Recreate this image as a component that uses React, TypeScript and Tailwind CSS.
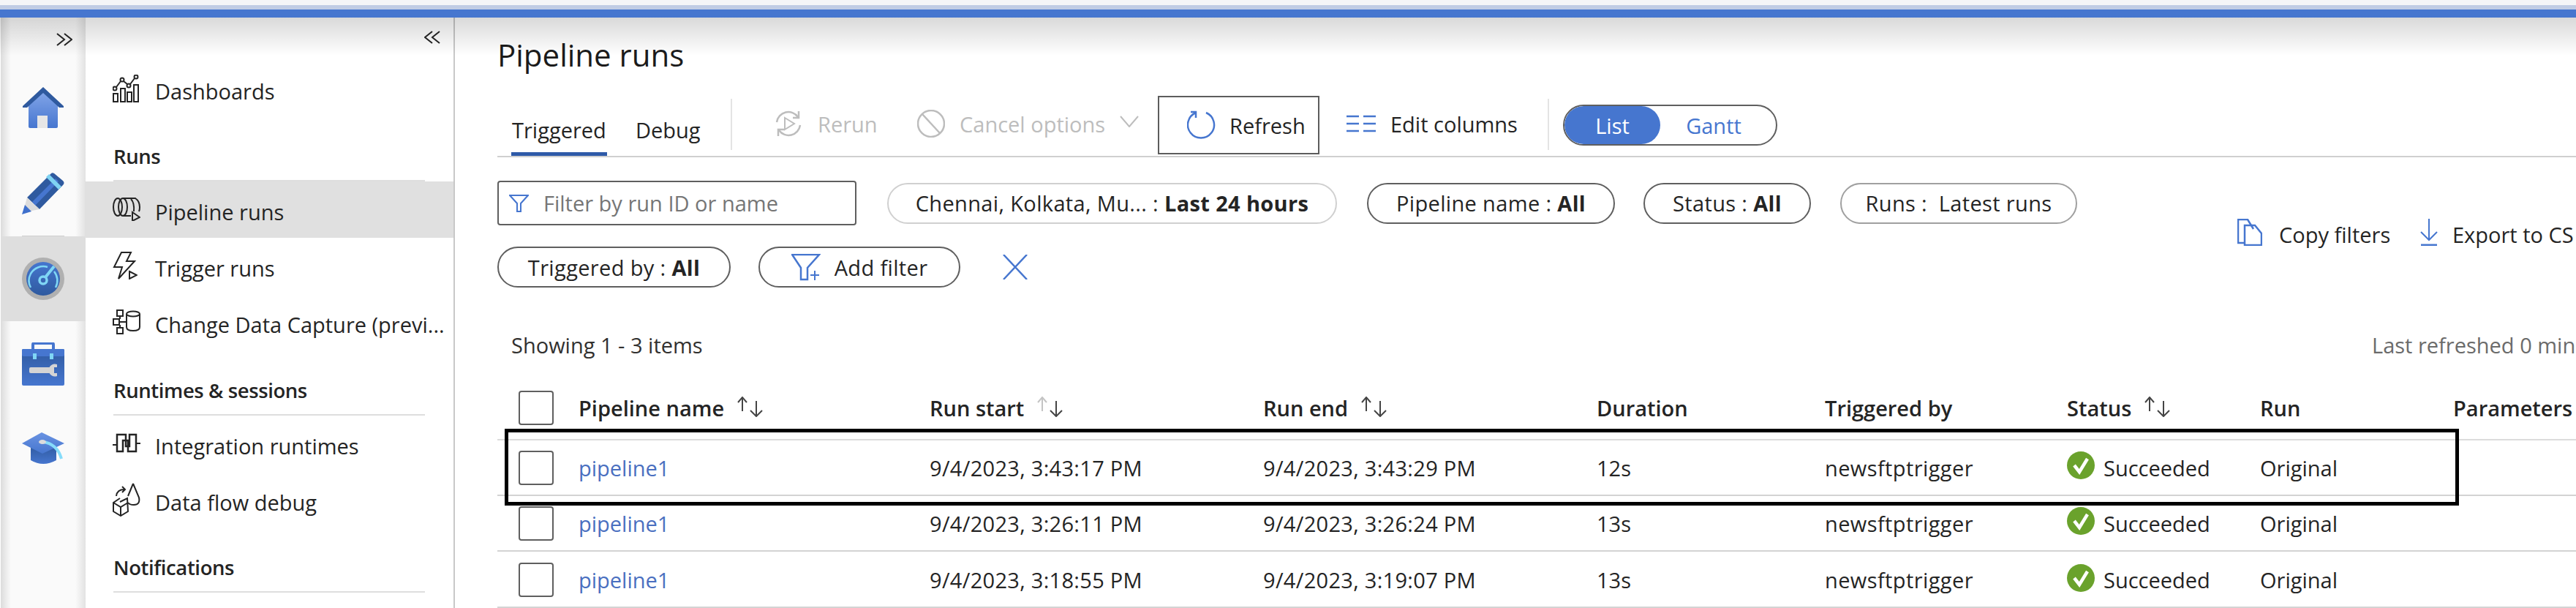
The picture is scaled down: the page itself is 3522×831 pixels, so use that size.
import React from "react";

const S = ({ w, h, children, className = "" }: { w: number; h: number; children: React.ReactNode; className?: string }) => (
  <svg width={w} height={h} viewBox={`0 0 ${w} ${h}`} fill="none" stroke="currentColor" strokeWidth={2} className={`shrink-0 ${className}`}>
    {children}
  </svg>
);

const HomeIcon = () => (
  <svg width="58" height="58" viewBox="0 0 58 58">
    <defs><linearGradient id="hg" x1="0" y1="0" x2="0" y2="1"><stop offset="0" stopColor="#86a8ea" /><stop offset="1" stopColor="#4676cf" /></linearGradient></defs>
    <path d="M29 3 L9 24 V54 a2 2 0 0 0 2 2 H47 a2 2 0 0 0 2-2 V24 Z" fill="url(#hg)" />
    <path d="M1 26 L29 0 L57 26 V28 H51 L29 8 L7 28 H1 Z" fill="#2f5a9f" />
    <rect x="21" y="39" width="14" height="17" fill="#e6e6e6" />
  </svg>
);
const PencilIcon = () => (
  <svg width="59" height="59" viewBox="0 0 59 59">
    <path d="M7 35 L39 3 Q41 0 44 2 L56 12 Q59 15 56 18 L24 51 Z" fill="#2f5a9f" />
    <path d="M14 41 L46 9 L50 13 L18 46 Z" fill="#4676cf" />
    <path d="M33 7 L37 3 L54 20 L50 24 Z" fill="#7fd3f2" />
    <path d="M7 35 L24 51 L9 54 L4 46 Z" fill="#dcdcdc" />
    <path d="M4 45 L13 54 L0 58 Z" fill="#3f70cc" />
  </svg>
);
const GaugeIcon = () => (
  <svg width="58" height="58" viewBox="0 0 58 58">
    <defs><linearGradient id="gg" x1="0" y1="0" x2="0" y2="1"><stop offset="0" stopColor="#4676cf" /><stop offset="1" stopColor="#2f5a9f" /></linearGradient></defs>
    <circle cx="29" cy="29" r="29" fill="#b0b0b0" />
    <circle cx="29" cy="29" r="23" fill="url(#gg)" />
    <g fill="none" stroke="#7fd6f5" strokeWidth="2.5">
      <path d="M12 41 A20 20 0 0 1 12 22 A20 20 0 0 1 35 13" />
      <path d="M44 19 A20 20 0 0 1 46 41" />
      <circle cx="29" cy="31" r="5" strokeWidth="3.5" />
      <path d="M32 27 L44 12" strokeWidth="4" />
    </g>
  </svg>
);
const ToolboxIcon = () => (
  <svg width="58" height="59" viewBox="0 0 58 59">
    <defs><linearGradient id="tg" x1="0" y1="0" x2="0" y2="1"><stop offset="0" stopColor="#2f5a9f" /><stop offset="1" stopColor="#4676cf" /></linearGradient></defs>
    <path d="M15 10 V3 a2 2 0 0 1 2-2 H41 a2 2 0 0 1 2 2 V10" fill="none" stroke="#4676cf" strokeWidth="4" />
    <rect x="0" y="9" width="58" height="50" rx="2" fill="url(#tg)" />
    <rect x="0" y="9" width="58" height="10" rx="2" fill="#4676cf" />
    <rect x="15" y="15" width="5" height="8" fill="#7fd6f5" />
    <rect x="38" y="15" width="5" height="8" fill="#7fd6f5" />
    <rect x="10" y="34" width="33" height="8" rx="2" fill="#d4d4d4" />
    <path d="M48 30 A8.5 8.5 0 1 0 48 46 V42 H44 V34 H48 Z" fill="#d4d4d4" />
  </svg>
);
const HatIcon = () => (
  <svg width="58" height="45" viewBox="0 0 58 45">
    <defs>
      <linearGradient id="ha" x1="0" y1="0" x2="0" y2="1"><stop offset="0" stopColor="#6a93e2" /><stop offset="1" stopColor="#4676cf" /></linearGradient>
      <linearGradient id="hb" x1="0" y1="0" x2="0" y2="1"><stop offset="0" stopColor="#2f5a9f" /><stop offset="1" stopColor="#4676cf" /></linearGradient>
    </defs>
    <path d="M12 18 V38 Q29 48 47 38 V18 Z" fill="url(#hb)" />
    <path d="M0 15 L27 0 L58 15 L28 29 Z" fill="url(#ha)" />
    <path d="M28 13 Q48 15 54 36" fill="none" stroke="#86dcfa" strokeWidth="4" />
    <ellipse cx="28" cy="13" rx="5" ry="3" fill="#dcdcdc" />
  </svg>
);

const Dash = () => (
  <S w={36} h={38}>
    <rect x="1" y="26" width="6" height="11" /><rect x="11" y="19" width="6" height="18" /><rect x="20" y="24" width="6" height="13" /><rect x="29" y="14" width="6" height="23" />
    <circle cx="3" cy="19" r="2.5" /><circle cx="13" cy="7" r="2.5" /><circle cx="22" cy="15" r="2.5" /><circle cx="32" cy="3" r="2.5" />
    <path d="M5 17 L11 9 M15 9 L20 13 M24 13 L30 5" />
  </S>
);
const PipeRuns = () => (
  <S w={38} h={33}>
    <ellipse cx="7" cy="14" rx="6" ry="12" /><ellipse cx="14" cy="14" rx="6" ry="12" />
    <path d="M14 2 H31 Q37 6 37 14 Q37 18 36 20 M14 26 H25 M25 3 Q30 8 29 20" />
    <path d="M27 21 L37 28 L27 33 Z" />
  </S>
);
const TrigRuns = () => (
  <S w={34} h={38}>
    <path d="M12 1 H25 L19 13 H30 L8 37 L13 21 H2 Z" />
    <path d="M23 27 L33 32 L23 37 Z" />
  </S>
);
const Cdc = () => (
  <S w={38} h={34}>
    <rect x="6" y="1" width="8" height="8" /><rect x="1" y="13" width="8" height="8" /><rect x="6" y="25" width="8" height="8" />
    <path d="M10 9 V13 M9 17 H18 M10 21 V25" />
    <ellipse cx="28" cy="6" rx="9" ry="3.5" />
    <path d="M19 6 V24 Q19 29 28 29 Q37 29 37 24 V6" />
  </S>
);
const IntRt = () => (
  <S w={38} h={28}>
    <path d="M0 16 H5 M33 14 H38" />
    <path d="M6 2 H18 V18 H23 V2 H32 V25 H21 V10 H14 V25 H6 Z" strokeWidth="2.5" />
  </S>
);
const Dfd = () => (
  <S w={38} h={46}>
    <path d="M10 26 L20 21 L21 39 L11 45 L1 39 V27 L10 21 M1 27 L11 33 L21 27 M11 33 V45" />
    <path d="M5 18 Q6 9 16 9 M13 5 L17 9 L13 13" />
    <path d="M28 1 L36 20 Q38 30 29 30 Q23 30 21 27 M28 1 L21 18" />
  </S>
);

const NavItem = ({ icon, label, active = false }: { icon: React.ReactNode; label: string; active?: boolean }) => (
  <div className={`h-[77px] flex items-center pl-[38px] text-[#242424] ${active ? "bg-[#e0e0e0]" : ""}`}>
    <div className="w-[58px] flex items-center -mt-[2px]">{icon}</div>
    <span className="whitespace-nowrap pt-[5px]">{label}</span>
  </div>
);
const NavHead = ({ label }: { label: string }) => (
  <div className="mx-[39px] border-b-2 border-[#dedede] h-[60px] pb-[6px] flex items-center font-semibold text-[#242424] text-[27.5px] tracking-[-0.4px]">{label}</div>
);

const RailCell = ({ children, active = false }: { children: React.ReactNode; active?: boolean }) => (
  <div className={`h-[116px] flex items-center justify-center ${active ? "bg-[#dedede]" : ""}`}>{children}</div>
);

const Pill = ({ w, border, children }: { w: string; border: string; children: React.ReactNode }) => (
  <div className={`${w} ${border} h-[56px] border-2 rounded-[28px] flex items-center justify-center whitespace-nowrap text-[#242424] tracking-[0.35px]`}>{children}</div>
);

const Sort = ({ dim = false }: { dim?: boolean }) => (
  <svg width="36" height="28" viewBox="0 0 36 28" fill="none" stroke="#444" strokeWidth="2" className="ml-[17px] -mt-[4px] shrink-0">
    <path d="M8 20 V1 M2 8 L8 1 L14 8" stroke={dim ? "#c4c4c4" : "#444"} />
    <path d="M27 6 V27 M19 19 L27 27 L35 19" />
  </svg>
);

const Check = () => (
  <svg width="38" height="38" viewBox="0 0 38 38" className="mr-[12px] -mt-[6px] shrink-0">
    <circle cx="19" cy="19" r="19" fill="#6aa22c" />
    <path d="M10 19 L17 28 L28 10" fill="none" stroke="#fff" strokeWidth="4.5" />
  </svg>
);

const Box = () => <div className="w-[48px] h-[47px] border-2 border-[#5f5f5f] rounded-[4px] bg-white" />;

const cols = "grid grid-cols-[82px_480px_456px_456px_312px_331px_264px_264px_1fr] pl-[29px] items-center";

const rows = [
  { s: "9/4/2023, 3:43:17 PM", e: "9/4/2023, 3:43:29 PM", d: "12s", h: "h-[76px]" },
  { s: "9/4/2023, 3:26:11 PM", e: "9/4/2023, 3:26:24 PM", d: "13s", h: "h-[76px]" },
  { s: "9/4/2023, 3:18:55 PM", e: "9/4/2023, 3:19:07 PM", d: "13s", h: "h-[77px] pt-[2px]" },
];

export default function App() {
  return (
    <div className="relative w-[3522px] h-[831px] overflow-hidden bg-white text-[29px] leading-none font-['Open_Sans','Noto_Sans',sans-serif]">
      <div className="h-[7px] bg-[#f4f5f7]" />
      <div className="h-[6px] bg-[#c0cce4]" />
      <div className="h-[11px] bg-[#4676cf]" />
      <div className="flex h-[807px]">
        {/* icon rail */}
        <div className="w-[116px] ml-[1px] -mr-[1px] flex flex-col bg-[linear-gradient(to_right,#dcdcdc,#fafafa_12%,#fafafa_88%,#e2e2e2)]">
          <div className="h-[66px] flex justify-end items-start pt-[21px] pr-[18px] text-[#242424]">
            <S w={22} h={18}><path d="M1 1 L11 9 L1 17 M11 1 L21 9 L11 17" /></S>
          </div>
          <RailCell><HomeIcon /></RailCell>
          <RailCell><PencilIcon /></RailCell>
          <div className="mx-[29px] h-[1px] bg-[#cfcfcf]" />
          <RailCell active><GaugeIcon /></RailCell>
          <RailCell><ToolboxIcon /></RailCell>
          <RailCell><HatIcon /></RailCell>
          <div className="flex-1" />
        </div>

        {/* second nav */}
        <div className="w-[506px] border-r-2 border-[#c8c8c8] flex flex-col">
          <div className="h-[62px] flex justify-end pt-[18px] pr-[18px] text-[#242424]">
            <S w={22} h={18}><path d="M21 1 L11 9 L21 17 M11 1 L1 9 L11 17" /></S>
          </div>
          <div className="h-[77px] -mt-[3px]"><NavItem icon={<Dash />} label="Dashboards" /></div>
          <div className="mt-[28px]"><NavHead label="Runs" /></div>
          <NavItem active icon={<PipeRuns />} label="Pipeline runs" />
          <NavItem icon={<TrigRuns />} label="Trigger runs" />
          <NavItem icon={<Cdc />} label="Change Data Capture (previ..." />
          <div className="mt-[29px]"><NavHead label="Runtimes & sessions" /></div>
          <NavItem icon={<IntRt />} label="Integration runtimes" />
          <NavItem icon={<Dfd />} label="Data flow debug" />
          <div className="mt-[28px]"><NavHead label="Notifications" /></div>
        </div>

        {/* main */}
        <div className="flex-1 pl-[58px] min-w-0 flex flex-col">
          <div className="h-[108px] pt-[27px] text-[42px] text-[#1b1b1b]">
            <div className="h-[48px] flex items-center">Pipeline runs</div>
          </div>

          {/* toolbar */}
          <div className="h-[84px] border-b-2 border-[#cfcfcf] flex items-start whitespace-nowrap">
            <div className="relative h-[82px] w-[149px] pl-[20px] flex items-center pt-[10px] text-[#242424]">
              Triggered
              <div className="absolute left-[19px] w-[131px] h-[5px] bottom-0 bg-[#2e5aa8]" />
            </div>
            <div className="h-[82px] flex items-center pt-[10px] pl-[40px] w-[171px] -mr-[1px] text-[#242424]">Debug</div>
            <div className="w-[2px] h-[70px] mt-[4px] bg-[#e4e4e4]" />
            <div className="h-[82px] flex items-center pl-[58px] text-[#bdbdbd]">
              <S w={38} h={38} className="mr-[21px] -mt-[6px]">
                <path d="M3 17 A16 16 0 0 1 32 10 M35 21 A16 16 0 0 1 6 28" strokeWidth="2.5" />
                <path d="M33 2 V11 H25 M5 36 V27 H13" strokeWidth="2.5" />
                <path d="M14 11 L27 19 L14 27 Z" />
              </S>
              <span className="w-[78px] -mt-[6px]">Rerun</span>
            </div>
            <div className="h-[82px] flex items-center pl-[58px] text-[#bdbdbd]">
              <S w={38} h={38} className="mr-[20px] -mt-[6px]">
                <ellipse cx="19" cy="19" rx="18" ry="18" strokeWidth="2.5" /><path d="M7 6 L31 32" strokeWidth="2.5" />
              </S>
              <span className="w-[203px] -mt-[6px]">Cancel options</span>
              <S w={26} h={16} className="ml-[16px] -mt-[12px]"><path d="M1 1 L13 15 L25 1" /></S>
            </div>
            <div className="ml-[26px] w-[221px] h-[80px] border-2 border-[#5c5c5c] flex items-center pl-[38px] text-[#242424]">
              <S w={40} h={40} className="mr-[18px] text-[#4676cf]">
                <path d="M26 3 A18 18 0 1 1 12 3" strokeWidth="2.5" /><path d="M5 2 H12 V10" strokeWidth="2.5" />
              </S>
              Refresh
            </div>
            <div className="h-[82px] flex items-center pl-[37px] w-[312px] text-[#242424]">
              <S w={40} h={24} className="mr-[20px] -mt-[6px] text-[#4676cf]">
                <path d="M0 2 H17 M23 2 H40 M0 12 H17 M23 12 H40 M0 22 H17 M23 22 H40" strokeWidth="2.5" />
              </S>
              <span className="-mt-[6px]">Edit columns</span>
            </div>
            <div className="w-[2px] h-[70px] mt-[4px] bg-[#e4e4e4]" />
            <div className="ml-[19px] mt-[12px] w-[293px] h-[56px] border-2 border-[#5f5f5f] rounded-[28px] flex items-center overflow-hidden">
              <div className="w-[131px] h-full bg-[#4676cf] rounded-[26px] text-white flex items-center justify-center">List</div>
              <div className="flex-1 text-[#4676cf] flex justify-center pr-[12px]">Gantt</div>
            </div>
          </div>

          {/* filters */}
          <div className="flex items-start whitespace-nowrap">
            <div className="w-[2160px] shrink-0 pt-[32px] flex flex-col gap-[29px]">
              <div className="flex items-center">
                <div className="w-[491px] h-[61px] border-2 border-[#5f5f5f] rounded-[4px] flex items-center pl-[14px] text-[#767676]">
                  <S w={27} h={24} className="mr-[20px] text-[#4676cf]"><path d="M1 1 H26 L16 12 V23 H11 V12 Z" /></S>
                  Filter by run ID or name
                </div>
                <div className="ml-[42px]">
                  <Pill w="w-[615px]" border="border-[#d0d0d0]"><span>Chennai, Kolkata, Mu... :&nbsp;</span><b className="font-bold">Last 24 hours</b></Pill>
                </div>
                <div className="ml-[41px]">
                  <Pill w="w-[339px]" border="border-[#5f5f5f]"><span>Pipeline name :&nbsp;</span><b className="font-bold">All</b></Pill>
                </div>
                <div className="ml-[39px]">
                  <Pill w="w-[229px]" border="border-[#5f5f5f]"><span>Status :&nbsp;</span><b className="font-bold">All</b></Pill>
                </div>
                <div className="ml-[40px]">
                  <Pill w="w-[324px]" border="border-[#a0a0a0]"><span>Runs :&nbsp;&nbsp;</span>Latest runs</Pill>
                </div>
              </div>
              <div className="flex items-center">
                <Pill w="w-[319px]" border="border-[#5f5f5f]"><span>Triggered by :&nbsp;</span><b className="font-bold">All</b></Pill>
                <div className="ml-[38px]">
                  <Pill w="w-[276px]" border="border-[#5f5f5f]">
                    <S w={40} h={37} className="mr-[19px] text-[#4676cf]">
                      <path d="M1 1 H38 L22 19 V35 H13 V19 Z" strokeWidth="2.5" /><path d="M26 29 H38 M32 23 V36" />
                    </S>
                    Add filter
                  </Pill>
                </div>
                <S w={34} h={34} className="ml-[58px] text-[#4676cf]"><path d="M1 0 L33 34 M33 0 L1 34" strokeWidth="2.5" /></S>
              </div>
            </div>
            <div className="ml-[219px] mt-[84px] flex items-center text-[#242424]">
              <S w={34} h={37} className="mr-[23px] text-[#4676cf]">
                <path d="M9 33 H1 V1 H14 L22 14" strokeWidth="2.5" /><path d="M10 9 H24 L33 20 V36 H10 Z" strokeWidth="2.5" />
              </S>
              <span className="w-[154px] pt-[6px]">Copy filters</span>
              <S w={24} h={37} className="ml-[39px] mr-[20px] text-[#4676cf]">
                <path d="M12 0 V28 M1 18 L12 29 L23 18" /><path d="M1 36 H23" strokeWidth="3" />
              </S>
              <span className="pt-[6px]">Export to CS</span>
            </div>
          </div>

          {/* count */}
          <div className="mt-[46px] h-[64px] flex items-center whitespace-nowrap text-[#323130]">
            <div className="w-[2563px] shrink-0 pl-[19px]">Showing 1 - 3 items</div>
            <div className="text-[#6b6b6b]">Last refreshed 0 min</div>
          </div>

          {/* table */}
          <div className="mt-[23px] whitespace-nowrap">
            <div className={`${cols} h-[76px] pb-[11px] border-b-2 border-[#dcdcdc] font-semibold text-[#242424]`}>
              <Box />
              <div className="flex items-center">Pipeline name<Sort /></div>
              <div className="flex items-center">Run start<Sort dim /></div>
              <div className="flex items-center">Run end<Sort /></div>
              <div>Duration</div>
              <div>Triggered by</div>
              <div className="flex items-center">Status<Sort /></div>
              <div>Run</div>
              <div>Parameters</div>
            </div>
            {rows.map((r) => (
              <div key={r.s} className={`${cols} ${r.h} border-b-2 border-[#d3d3d3] text-[#242424]`}>
                <Box />
                <div className="text-[#4a6fc0]">pipeline1</div>
                <div className="tracking-[0.3px]">{r.s}</div>
                <div className="tracking-[0.3px]">{r.e}</div>
                <div>{r.d}</div>
                <div className="tracking-[0.4px]">newsftptrigger</div>
                <div className="flex items-center"><Check />Succeeded</div>
                <div>Original</div>
                <div />
              </div>
            ))}
          </div>
        </div>
      </div>

      {/* soft shadow beneath the blue bar */}
      <div className="absolute left-0 right-0 top-[24px] h-[52px] pointer-events-none bg-[linear-gradient(to_bottom,rgba(0,0,0,0.15),rgba(0,0,0,0))]" />
      {/* annotation rectangle drawn over the first row */}
      <div className="absolute left-[690px] top-[586px] w-[2672px] h-[105px] border-[5px] border-black pointer-events-none" />
    </div>
  );
}
